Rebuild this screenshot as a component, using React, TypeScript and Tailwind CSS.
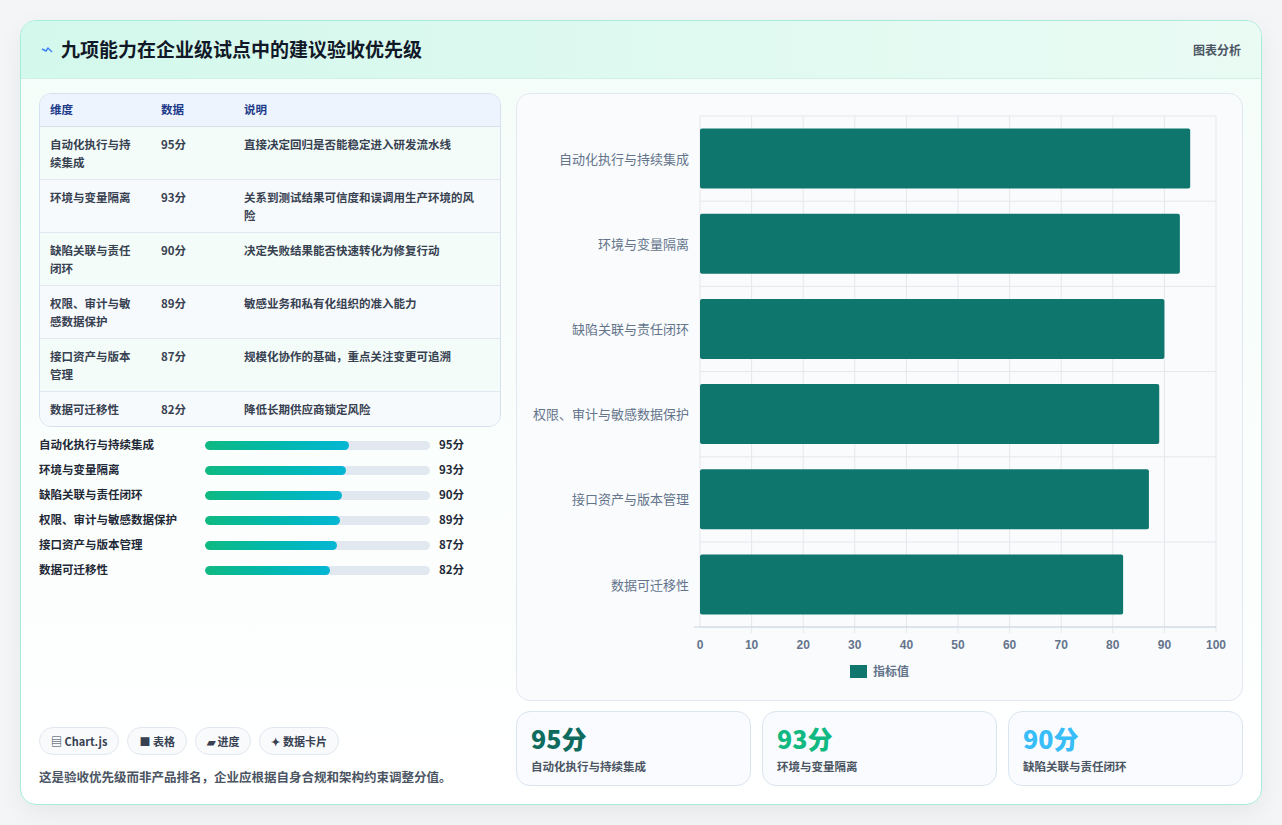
import React from "react";

const rows = [
  ["自动化执行与持续集成", 95, "直接决定回归是否能稳定进入研发流水线"],
  ["环境与变量隔离", 93, "关系到测试结果可信度和误调用生产环境的风险"],
  ["缺陷关联与责任闭环", 90, "决定失败结果能否快速转化为修复行动"],
  ["权限、审计与敏感数据保护", 89, "敏感业务和私有化组织的准入能力"],
  ["接口资产与版本管理", 87, "规模化协作的基础，重点关注变更可追溯"],
  ["数据可迁移性", 82, "降低长期供应商锁定风险"],
] as const;

const tableNames = ["自动化执行与持\n续集成", "环境与变量隔离", "缺陷关联与责任\n闭环", "权限、审计与敏\n感数据保护", "接口资产与版本\n管理", "数据可迁移性"];

function Chart() {
  const x0 = 183, w = 516, y0 = 22, band = 85.2;
  return (
    <svg width="725" height="607" className="block">
      {Array.from({ length: 11 }).map((_, i) => (
        <line key={i} x1={x0 + (w * i) / 10} x2={x0 + (w * i) / 10} y1={y0} y2={y0 + 511 + (i===0?0:6)} stroke="#e5e7eb" />
      ))}
      {Array.from({ length: 7 }).map((_, i) => (
        <line key={i} x1={x0} x2={x0 + w} y1={y0 + band * i} y2={y0 + band * i} stroke="#e5e7eb" />
      ))}
      <line x1={x0 - 6} x2={x0 + w} y1={y0 + 511} y2={y0 + 511} stroke="#cbd5e1" />
      {rows.map((r, i) => (
        <g key={i}>
          <rect x={x0} y={y0 + band * i + 12.5} width={(w * r[1]) / 100} height={60} rx={2} fill="#0f766e" />
          <text x={172} y={y0 + band * i + band / 2 + 5} textAnchor="end" fontSize="13" fill="#64748b" fontFamily="'Noto Sans CJK SC', sans-serif">{r[0]}</text>
        </g>
      ))}
      {Array.from({ length: 11 }).map((_, i) => (
        <text key={i} x={x0 + (w * i) / 10} y={555} textAnchor="middle" fontSize="12" fontWeight="600" fill="#64748b" fontFamily="'Liberation Sans', sans-serif">{i * 10}</text>
      ))}
      <rect x={333} y={571} width={17} height={13} fill="#0f766e" />
      <text x={356} y={582} fontSize="12" fontWeight="600" fill="#64748b" fontFamily="'Noto Sans CJK SC', sans-serif">指标值</text>
    </svg>
  );
}

export default function App() {
  const stats = [
    [95, "自动化执行与持续集成", "text-[#0f6b5e]"],
    [93, "环境与变量隔离", "text-[#10b981]"],
    [90, "缺陷关联与责任闭环", "text-[#38bdf8]"],
  ] as const;
  return (
    <div className="min-h-[825px] bg-[#f4f5f6] pt-[20px] px-[20px]" style={{ fontFamily: "'Noto Sans CJK SC', 'Noto Sans', sans-serif" }}>
      <div className="w-[1242px] h-[785px] rounded-[16px] border border-[#a7ecd9] bg-gradient-to-b from-[#f4fdf9] to-white shadow-[0_8px_24px_rgba(0,0,0,0.06)] overflow-hidden flex flex-col">
        <div className="h-[58px] shrink-0 flex items-center justify-between px-[20px] bg-gradient-to-r from-[#d3f8ec] to-[#eafbf4] border-b border-[#d2f1e6]">
          <div className="flex items-center gap-[8px]">
            <svg width="12" height="10" viewBox="0 0 12 10"><path d="M1 4 L5 6 L7 3 L11 7" stroke="#3b82f6" strokeWidth="1.4" fill="none" /></svg>
            <h1 className="text-[19px] font-bold text-[#111827]">九项能力在企业级试点中的建议验收优先级</h1>
          </div>
          <span className="text-[12px] font-semibold text-[#4b5563]">图表分析</span>
        </div>
        <div className="flex-1 flex gap-[15px] px-[18px] pt-[14px] pb-[17px]">
          <div className="w-[463px] flex flex-col">
            <div className="rounded-[12px] border border-[#d5e1ee] overflow-hidden bg-[#f8fbfd]">
              <div className="grid grid-cols-[111px_83px_1fr] h-[33px] items-center px-[10px] bg-[#edf4fd] border-b border-[#d5e1ee] text-[11.5px] font-semibold text-[#1e3a8a]">
                <span>维度</span><span>数据</span><span>说明</span>
              </div>
              {rows.map((r, i) => (
                <div key={i} className={`grid grid-cols-[111px_83px_1fr] px-[10px] text-[11.5px] font-semibold text-[#374151] leading-[18px] ${i < 5 ? "h-[53px] border-b border-[#e2e8f0] pt-[8px]" : "h-[34px] pt-[8px]"} ${i % 2 ? "bg-[#f7fafc]" : "bg-[#f3fcf8]"}`}>
                  <span className="whitespace-pre-line">{tableNames[i]}</span>
                  <span>{r[1]}分</span>
                  <span className="pr-[8px]">{r[2]}</span>
                </div>
              ))}
            </div>
            <div className="mt-[9px] flex flex-col gap-[7px]">
              {rows.map((r, i) => (
                <div key={i} className="flex items-center h-[18px] text-[11.5px] font-semibold text-[#1f2937]">
                  <span className="w-[166px]">{r[0]}</span>
                  <div className="w-[225px] h-[9px] rounded-full bg-[#e2e8f0] overflow-hidden">
                    <div className="h-full rounded-full bg-gradient-to-r from-[#10b981] to-[#06b6d4]" style={{ width: `${r[1] * 0.675}%` }} />
                  </div>
                  <span className="ml-[9px]">{r[1]}分</span>
                </div>
              ))}
            </div>
            <div className="mt-auto">
              <div className="flex gap-[8px]">
                {["▤ Chart.js", "■ 表格", "▰ 进度", "✦ 数据卡片"].map((c) => (
                  <span key={c} className="h-[28px] px-[11px] rounded-full border border-[#e2e8f0] bg-[#f8fafc] flex items-center text-[11px] font-semibold text-[#374151]">{c}</span>
                ))}
              </div>
              <p className="mt-[13px] text-[12.5px] font-semibold text-[#4b5563]">这是验收优先级而非产品排名，企业应根据自身合规和架构约束调整分值。</p>
            </div>
          </div>
          <div className="flex-1 flex flex-col gap-[10px]">
            <div className="h-[608px] rounded-[14px] border border-[#e2e8f0] bg-[#f9fbfd] overflow-hidden">
              <Chart />
            </div>
            <div className="grid grid-cols-3 gap-[11px]">
              {stats.map((s) => (
                <div key={s[1]} className="h-[75px] rounded-[14px] border border-[#dbe5f0] bg-[#f9fbfe] px-[14px] pt-[10px]">
                  <div className={`text-[25px] font-extrabold leading-[32px] ${s[2]}`}>{s[0]}分</div>
                  <div className="mt-[4px] text-[11.5px] font-semibold text-[#4b5563]">{s[1]}</div>
                </div>
              ))}
            </div>
          </div>
        </div>
      </div>
    </div>
  );
}
